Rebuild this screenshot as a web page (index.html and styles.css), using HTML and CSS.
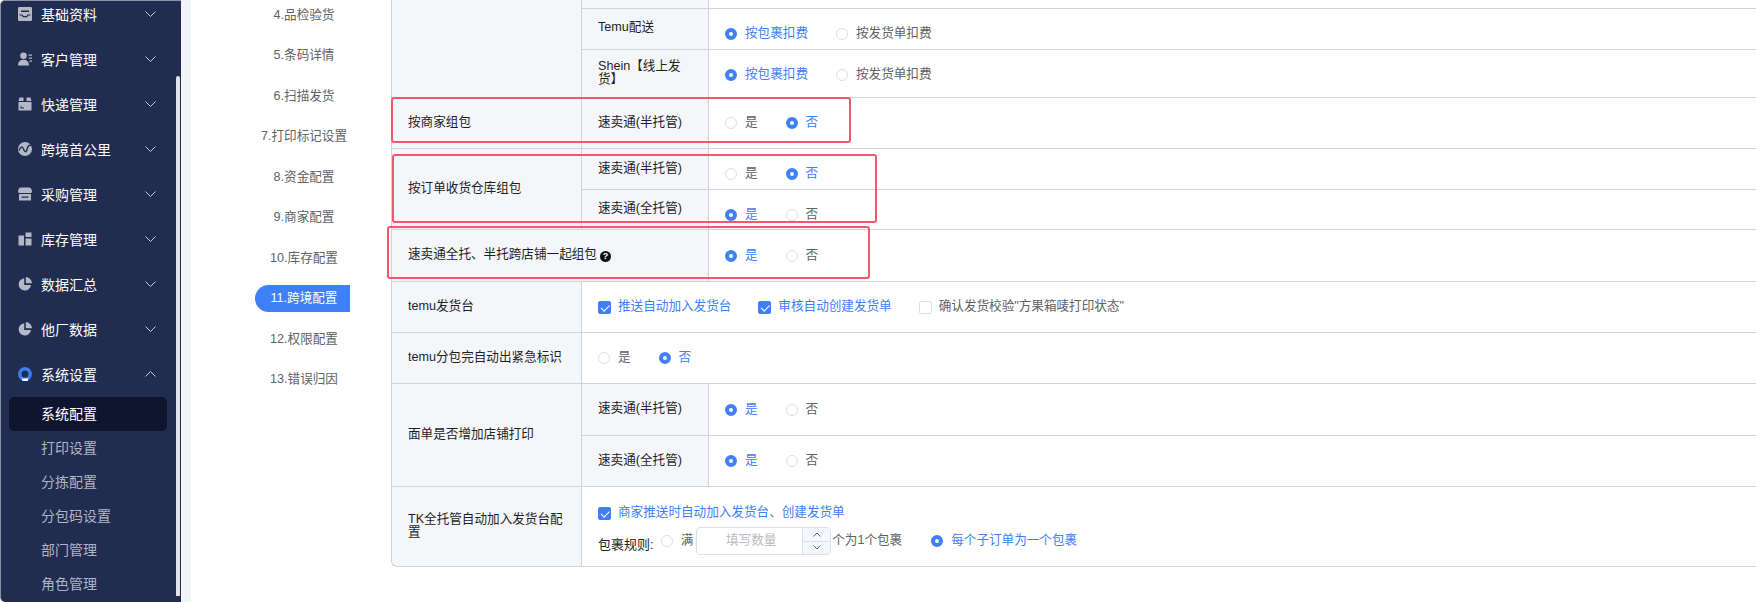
FILE: index.html
```html
<!DOCTYPE html>
<html lang="zh-CN">
<head>
<meta charset="utf-8">
<title>跨境配置</title>
<link rel="stylesheet" href="styles.css">
</head>
<body>
<div class="page">
  <aside class="side">
    <ul class="menu">
      <li class="mi"><svg class="ico" viewBox="0 0 14 14"><path d="M0 1.2Q0 0 1.2 0h11.6Q14 0 14 1.2v11.6q0 1.2-1.2 1.2H1.2Q0 14 0 12.800zM3 3.500v1.400h8V3.500zM1.500 7.500v1h2.300l1 1.800h4.400l1-1.800h2.300v-1H9.500L8.600 9H5.400l-.9-1.500z" fill-rule="evenodd"/></svg><span class="mt">基础资料</span><svg class="chev" viewBox="0 0 11 6"><path d="M.5.5l5 5 5-5"/></svg></li>
      <li class="mi"><svg class="ico" viewBox="0 0 14 14"><circle cx="5.500" cy="3.800" r="3.300"/><path d="M0 13.500Q0 7.800 5.500 7.800t5.500 5.700zM10.500 2.500H14v1.300h-3.500zM11 5.500h3v1.300h-3zM11.500 8.500H14v1.300h-2.500z"/></svg><span class="mt">客户管理</span><svg class="chev" viewBox="0 0 11 6"><path d="M.5.5l5 5 5-5"/></svg></li>
      <li class="mi"><svg class="ico" viewBox="0 0 14 14"><path d="M1.500.5h4v3.500h-5zM8.500.5h4l1 3.500h-5zM.5 5h13v8.500H.5zM2.500 9v2.500h3.500v-1H3.500V9z" fill-rule="evenodd"/></svg><span class="mt">快递管理</span><svg class="chev" viewBox="0 0 11 6"><path d="M.5.5l5 5 5-5"/></svg></li>
      <li class="mi"><svg class="ico" viewBox="0 0 14 14"><circle cx="7" cy="7" r="7"/><path class="cut" d="M1 8.500C3 4 4.500 4 5.500 7s2.500 4 3.500.5S11 2.500 13 3.500"/></svg><span class="mt">跨境首公里</span><svg class="chev" viewBox="0 0 11 6"><path d="M.5.5l5 5 5-5"/></svg></li>
      <li class="mi"><svg class="ico" viewBox="0 0 14 14"><path d="M3 .5h8q2.500 0 3 4 0 1.500-1.500 1.500h-11Q0 6 0 4.500 .5.500 3 .5zM1 7h12v6.500H1zM3.500 9.500v1.300h7V9.500z" fill-rule="evenodd"/></svg><span class="mt">采购管理</span><svg class="chev" viewBox="0 0 11 6"><path d="M.5.5l5 5 5-5"/></svg></li>
      <li class="mi"><svg class="ico" viewBox="0 0 14 14"><path d="M.5 3.500h5.500v10H.5zM7.500.5h6v4.500h-6zM7.500 6.500h6v7h-6z"/></svg><span class="mt">库存管理</span><svg class="chev" viewBox="0 0 11 6"><path d="M.5.5l5 5 5-5"/></svg></li>
      <li class="mi"><svg class="ico" viewBox="0 0 14 14"><path d="M6.200 1.200A6.200 6.200 0 1 0 13 8H6.200zM7.800 0v6.300H14A6.500 6.500 0 0 0 7.800 0z"/></svg><span class="mt">数据汇总</span><svg class="chev" viewBox="0 0 11 6"><path d="M.5.5l5 5 5-5"/></svg></li>
      <li class="mi"><svg class="ico" viewBox="0 0 14 14"><path d="M6.200 1.200A6.200 6.200 0 1 0 13 8H6.200zM7.800 0v6.300H14A6.500 6.500 0 0 0 7.800 0z"/></svg><span class="mt">他厂数据</span><svg class="chev" viewBox="0 0 11 6"><path d="M.5.500l5 5 5-5"/></svg></li>
      <li class="mi"><svg class="ico" viewBox="0 0 14 14"><circle class="ring" cx="7" cy="7" r="5.200"/><path class="ringw" d="M3.500 11.500h7l-1 2.500h-5z"/></svg><span class="mt">系统设置</span><svg class="chev" viewBox="0 0 11 6"><path d="M.5 5.500l5-5 5 5"/></svg></li>
    </ul>
    <ul class="sub">
      <li class="si on">系统配置</li>
      <li class="si">打印设置</li>
      <li class="si">分拣配置</li>
      <li class="si">分包码设置</li>
      <li class="si">部门管理</li>
      <li class="si">角色管理</li>
    </ul>
    <div class="sbar"></div>
  </aside>
  <div class="gutter"></div>
  <main class="main">
    <ul class="steps">
      <li class="st">4.品检验货</li>
      <li class="st">5.条码详情</li>
      <li class="st">6.扫描发货</li>
      <li class="st">7.打印标记设置</li>
      <li class="st">8.资金配置</li>
      <li class="st">9.商家配置</li>
      <li class="st">10.库存配置</li>
      <li class="st act">11.跨境配置</li>
      <li class="st">12.权限配置</li>
      <li class="st">13.错误归因</li>
    </ul>
    <div class="wrap">
      <table class="tb">
        <colgroup><col class="c1"><col class="c2"><col></colgroup>
        <tr class="r9"><td class="lb" rowspan="3"></td><td class="lb"></td><td></td></tr>
        <tr class="r41"><td class="lb up">Temu配送</td><td class="low"><div class="opts"><span class="rd on"><i></i>按包裹扣费</span><span class="rd"><i></i>按发货单扣费</span></div></td></tr>
        <tr class="r48"><td class="lb">Shein【线上发货】</td><td class="low2"><div class="opts"><span class="rd on"><i></i>按包裹扣费</span><span class="rd"><i></i>按发货单扣费</span></div></td></tr>
        <tr class="r51"><td class="lb">按商家组包</td><td class="lb">速卖通(半托管)</td><td><div class="opts"><span class="rd"><i></i>是</span><span class="rd on"><i></i>否</span></div></td></tr>
        <tr class="r41"><td class="lb" rowspan="2">按订单收货仓库组包</td><td class="lb">速卖通(半托管)</td><td class="low"><div class="opts"><span class="rd"><i></i>是</span><span class="rd on"><i></i>否</span></div></td></tr>
        <tr class="r40"><td class="lb">速卖通(全托管)</td><td class="low"><div class="opts"><span class="rd on"><i></i>是</span><span class="rd"><i></i>否</span></div></td></tr>
        <tr class="r52"><td class="lb" colspan="2">速卖通全托、半托跨店铺一起组包<span class="help">?</span></td><td><div class="opts"><span class="rd on"><i></i>是</span><span class="rd"><i></i>否</span></div></td></tr>
        <tr class="r51"><td class="lb">temu发货台</td><td colspan="2"><div class="opts checks"><span class="cb on"><i></i>推送自动加入发货台</span><span class="cb on"><i></i>审核自动创建发货单</span><span class="cb"><i></i>确认发货校验"方果箱唛打印状态"</span></div></td></tr>
        <tr class="r51"><td class="lb">temu分包完自动出紧急标识</td><td colspan="2"><div class="opts"><span class="rd"><i></i>是</span><span class="rd on"><i></i>否</span></div></td></tr>
        <tr class="r52"><td class="lb" rowspan="2">面单是否增加店铺打印</td><td class="lb">速卖通(半托管)</td><td><div class="opts"><span class="rd on"><i></i>是</span><span class="rd"><i></i>否</span></div></td></tr>
        <tr class="r51"><td class="lb">速卖通(全托管)</td><td><div class="opts"><span class="rd on"><i></i>是</span><span class="rd"><i></i>否</span></div></td></tr>
        <tr class="r80"><td class="lb last">TK全托管自动加入发货台配置</td><td colspan="2">
          <div class="stack">
            <span class="cb on"><i></i>商家推送时自动加入发货台、创建发货单</span>
            <div class="rule">
              <span class="rl">包裹规则:</span>
              <span class="rd"><i></i>满</span>
              <span class="num"><span class="ph">填写数量</span><span class="stp"><b><svg viewBox="0 0 8 5"><path d="M.5 4.500L4 1l3.500 3.500"/></svg></b><b><svg viewBox="0 0 8 5"><path d="M.5.500L4 4 7.500.500"/></svg></b></span></span>
              <span class="unit">个为1个包裹</span>
              <span class="rd on far"><i></i>每个子订单为一个包裹</span>
            </div>
          </div>
        </td></tr>
      </table>
      <div class="mark m1"></div>
      <div class="mark m2"></div>
      <div class="mark m3"></div>
    </div>
  </main>
</div>
</body>
</html>
```
FILE: styles.css
```css
* { box-sizing: border-box; }
html, body { margin: 0; height: 602px; overflow: hidden; background: #fff; }
body { font-family: "Liberation Sans", "Noto Sans CJK SC", sans-serif; font-size: 12.6px; color: #606266; }
ul { list-style: none; margin: 0; padding: 0; }

.page { display: flex; height: 602px; }

.side { position: relative; flex: 0 0 181px; height: 602px; background: #202c50; border-top: 1px solid #8d909c; border-left: 1px solid #8d909c; border-radius: 5px 0 0 5px; overflow: hidden; }
.menu { margin-top: -10px; }
.mi { display: flex; align-items: center; height: 45px; padding-left: 17px; color: #fff; font-size: 14px; }
.ico { width: 14px; height: 14px; fill: #b4b7c4; flex: none; }
.cut { fill: none; stroke: #202c50; stroke-width: 1.4; }
.ring { fill: #202c50; stroke: #3f7df0; stroke-width: 3.400; }
.ringw { fill: #fff; }
.mt { margin-left: 9px; flex: 1; }
.chev { width: 11px; height: 6px; margin-right: 25px; fill: none; stroke: #c6cad6; stroke-width: 1; flex: none; }
.sub { margin-top: 1px; padding: 0 14px 0 8px; }
.si { height: 34px; line-height: 34px; padding-left: 32px; font-size: 14px; color: #b1b5c3; border-radius: 5px; }
.si.on { color: #fff; background: #10152f; }
.sbar { position: absolute; left: 175px; top: 75px; width: 4px; height: 520px; background: #dfe2e9; border-radius: 2px 2px 0 0; }

.gutter { flex: 0 0 10px; background: #f3f4f8; }

.main { flex: 1; min-width: 0; display: flex; align-items: flex-start; }
.steps { flex: 0 0 159px; padding: 1.500px 0 0 64px; display: flex; flex-direction: column; gap: 13.500px; }
.st { height: 27px; line-height: 27px; text-align: center; padding-left: 3px; white-space: nowrap; color: #606266; }
.st.act { color: #fff; background: #4080f7; border-radius: 14px 0 0 14px; }

.wrap { position: relative; flex: 1; min-width: 0; margin-left: 41px; }
.tb { width: 100%; table-layout: fixed; border-collapse: separate; border-spacing: 0; }
.c1 { width: 190px; }
.c2 { width: 127px; }
.tb td { padding: 0 16px; border-left: 1px solid #d0d2da; border-bottom: 1px solid #d0d2da; line-height: 1; }
.tb td.lb { background: #f5f6fa; color: #1e1e1e; padding-bottom: 2px; }
.tb td.up { padding-bottom: 4px; }
.tb td.last { border-bottom-left-radius: 6px; }
.tb td.low { padding-top: 10px; }
.tb td.low2 { padding-top: 3px; }
.r9 { height: 9px; }
.r40 { height: 40px; }
.r41 { height: 41px; }
.r48 { height: 48px; }
.r51 { height: 51px; }
.r52 { height: 52px; }
.r80 { height: 80px; }

.opts { display: flex; align-items: center; gap: 28px; }
.checks { gap: 27px; }
.rd, .cb { display: inline-flex; align-items: center; white-space: nowrap; line-height: 16px; color: #606266; padding-bottom: 2px; }
.rd { gap: 8px; }
.cb { gap: 7px; }
.rd.on, .cb.on { color: #4080f7; }
.rd i { width: 12px; height: 12px; flex: none; margin-top: 2px; border-radius: 50%; background: #fff; border: 1px solid #dcdfe6; }
.rd.on i { background: #fff; border: 4px solid #4080f7; }
.cb i { position: relative; width: 13px; height: 13px; flex: none; margin-top: 2px; border-radius: 2px; background: #fff; border: 1px solid #dcdfe6; }
.cb.on i { background: #4080f7; border-color: #4080f7; }
.cb.on i::after { content: ""; position: absolute; left: 3.500px; top: 1.500px; width: 3.500px; height: 6.500px; border: solid #fff; border-width: 0 1px 1px 0; transform: rotate(45deg); }
.help { display: inline-block; width: 11px; height: 11px; margin-left: 3px; border-radius: 50%; background: #111; color: #fff; font-size: 9px; font-weight: 700; line-height: 11px; text-align: center; vertical-align: -1px; }

.stack { display: flex; flex-direction: column; gap: 5px; padding-top: 6px; }
.rule { display: flex; align-items: center; }
.rl { font-size: 13px; color: #1e1e1e; margin-top: 6px; margin-right: 7px; }
.num { display: flex; width: 135px; height: 28px; margin-left: 3px; border: 1px solid #dcdfe6; border-radius: 4px; overflow: hidden; }
.ph { flex: 1; line-height: 24px; padding-left: 3px; text-align: center; color: #b9bbc1; }
.stp { display: flex; flex-direction: column; width: 28px; border-left: 1px solid #dcdfe6; background: #f5f7fc; }
.stp b { flex: 1; display: flex; align-items: center; justify-content: center; }
.stp b + b { border-top: 1px solid #dcdfe6; }
.stp svg { width: 8px; height: 5px; fill: none; stroke: #606266; stroke-width: 1; }
.unit { margin-left: 1px; color: #606266; padding-bottom: 2px; }
.far { margin-left: 29px; }

.mark { position: absolute; border: 2px solid #f5566c; border-radius: 3px; pointer-events: none; }
.m1 { left: 0; top: 97px; width: 460px; height: 46px; }
.m2 { left: 1px; top: 154px; width: 485px; height: 69px; }
.m3 { left: -4px; top: 226px; width: 483px; height: 53px; }
```
